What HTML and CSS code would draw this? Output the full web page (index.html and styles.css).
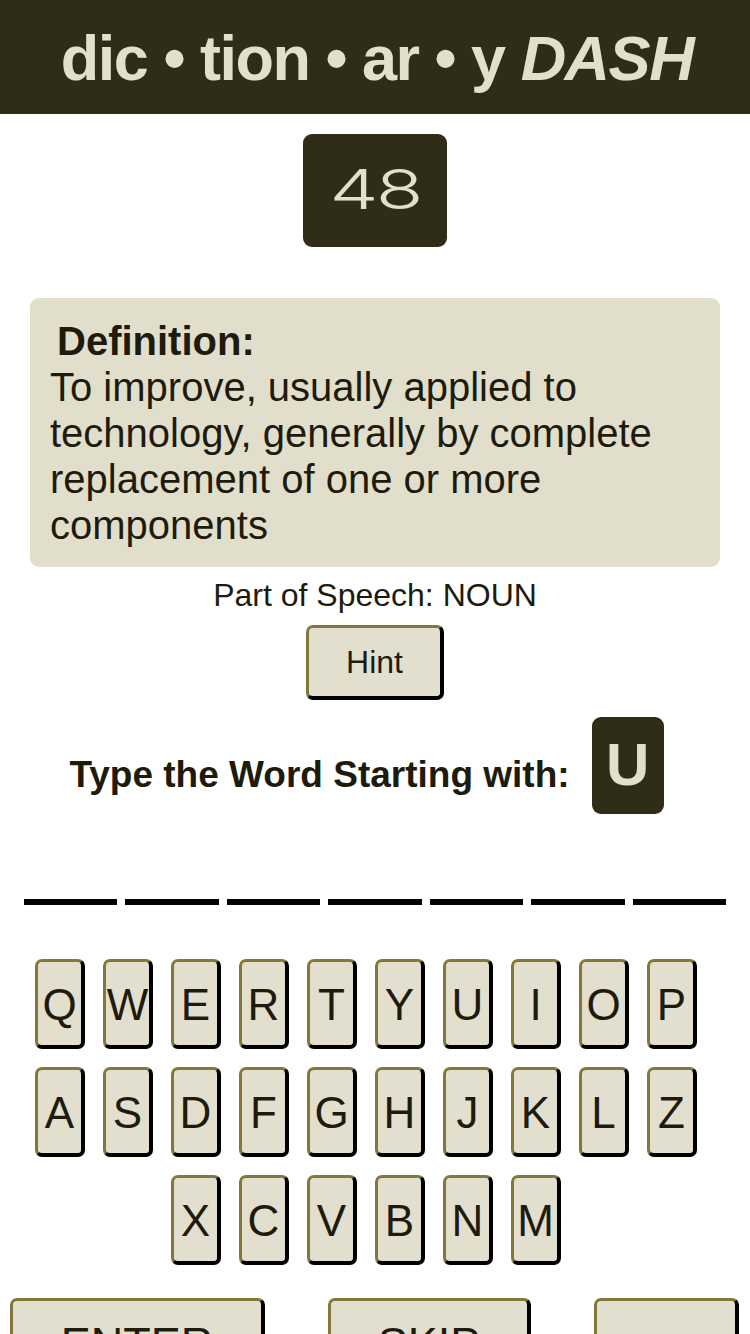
FILE: index.html
```html
<!DOCTYPE html>
<html>
<head>
<meta charset="utf-8">
<link rel="stylesheet" href="styles.css">
</head>
<body>
<header class="top">
  <h1 class="title">dic • tion • ar • y <em>DASH</em></h1>
</header>
<main class="game">
  <div class="score"><span class="score-num">48</span></div>

  <section class="definition">
    <div class="def-label">Definition:</div>
    <div class="def-text">To improve, usually applied to technology, generally by complete replacement of one or more components</div>
  </section>

  <div class="pos">Part of Speech: NOUN</div>
  <button class="hint">Hint</button>

  <div class="prompt">
    <span class="prompt-text">Type the Word Starting with:</span>
    <span class="letter-box">U</span>
  </div>

  <div class="blanks">
    <span class="blank"></span><span class="blank"></span><span class="blank"></span><span class="blank"></span><span class="blank"></span><span class="blank"></span><span class="blank"></span>
  </div>

  <div class="keyboard">
    <div class="krow">
      <button class="key">Q</button><button class="key">W</button><button class="key">E</button><button class="key">R</button><button class="key">T</button><button class="key">Y</button><button class="key">U</button><button class="key">I</button><button class="key">O</button><button class="key">P</button>
    </div>
    <div class="krow">
      <button class="key">A</button><button class="key">S</button><button class="key">D</button><button class="key">F</button><button class="key">G</button><button class="key">H</button><button class="key">J</button><button class="key">K</button><button class="key">L</button><button class="key">Z</button>
    </div>
    <div class="krow">
      <button class="key">X</button><button class="key">C</button><button class="key">V</button><button class="key">B</button><button class="key">N</button><button class="key">M</button>
    </div>
  </div>

  <div class="actions">
    <button class="action enter">ENTER</button>
    <button class="action skip">SKIP</button>
    <button class="action del" aria-label="Delete">
      <svg class="del-icon" width="56" height="40" viewBox="0 0 56 40"><path d="M18 4 H50 a3 3 0 0 1 3 3 V33 a3 3 0 0 1 -3 3 H18 L3 20 Z" fill="none" stroke="#1e1b0c" stroke-width="3.5" stroke-linejoin="round"/><path d="M26 12 L42 28 M42 12 L26 28" stroke="#1e1b0c" stroke-width="3.5" stroke-linecap="round"/></svg>
    </button>
  </div>
</main>
</body>
</html>
```

FILE: styles.css
```css
* { box-sizing: border-box; }
html, body { margin: 0; padding: 0; background: #ffffff; }
body {
  font-family: "Liberation Sans", Arial, sans-serif;
  color: #1e1b0c;
  width: 750px;
  height: 1334px;
  overflow: hidden;
}

.top {
  background: #2f2c17;
  height: 114px;
  display: flex;
  align-items: center;
  justify-content: center;
}
.title {
  margin: 0;
  color: #e2dfcd;
  font-size: 63px;
  font-weight: 700;
  letter-spacing: -1.5px;
  line-height: 1;
  padding-top: 2px;
  padding-left: 4px;
}
.title em { font-style: italic; }

.game {
  display: flex;
  flex-direction: column;
  align-items: center;
}

.score {
  margin-top: 20px;
  width: 144px;
  height: 113px;
  background: #2f2c17;
  border-radius: 9px;
  display: flex;
  align-items: center;
  justify-content: center;
}
.score-num {
  color: #e2dfcd;
  font-family: "Inter", "DejaVu Sans", sans-serif;
  font-weight: 300;
  font-size: 55px;
  line-height: 1;
  display: inline-block;
  transform: scaleX(1.42);
  letter-spacing: -2px;
  padding-bottom: 2px;
}

.definition {
  margin-top: 51px;
  width: 690px;
  background: #e1dfcc;
  border-radius: 9px;
  padding: 20px 20px 19px 20px;
  font-size: 40px;
  line-height: 46px;
}
.def-label {
  font-weight: 700;
  padding-left: 7px;
}

.pos {
  margin-top: 5px;
  font-size: 32px;
  line-height: 46px;
}

.hint {
  margin-top: 7px;
  width: 138px;
  height: 75px;
  font-family: "Liberation Sans", Arial, sans-serif;
  font-size: 32px;
  color: #1e1b0c;
  background: #e2dfcf;
  border-style: solid;
  border-width: 3px 4px 4px 3px;
  border-color: #85773a #000 #000 #85773a;
  border-radius: 7px;
  padding: 0;
}

.prompt {
  margin-top: 17px;
  display: flex;
  align-items: center;
  margin-right: 17px;
}
.prompt-text {
  font-size: 37px;
  font-weight: 700;
  padding-top: 18px;
}
.letter-box {
  margin-left: 22px;
  width: 72px;
  height: 97px;
  background: #2f2c17;
  color: #e2dfcd;
  border-radius: 9px;
  font-size: 60px;
  font-weight: 700;
  display: flex;
  align-items: center;
  justify-content: center;
  padding-bottom: 2px;
}

.blanks {
  margin-top: 85px;
  width: 750px;
  padding: 0 20px;
  display: flex;
}
.blank {
  flex: 1;
  height: 6px;
  margin: 0 4px;
  background: #000;
}

.keyboard {
  margin-top: 54px;
  display: flex;
  flex-direction: column;
  align-items: center;
  gap: 18px;
}
.krow {
  display: flex;
}
.key {
  width: 50px;
  height: 90px;
  margin-right: 18px;
  padding: 0;
  font-family: "Liberation Sans", Arial, sans-serif;
  font-size: 44px;
  color: #1e1b0c;
  background: #e2dfcf;
  border-style: solid;
  border-width: 3px 4px 4px 3px;
  border-color: #85773a #000 #000 #85773a;
  border-radius: 7px;
  display: flex;
  align-items: center;
  justify-content: center;
  padding-top: 2px;
}

.actions {
  margin-top: 33px;
  width: 750px;
  display: flex;
  align-items: flex-start;
}
.action {
  height: 92px;
  font-family: "Liberation Sans", Arial, sans-serif;
  font-size: 45px;
  color: #1e1b0c;
  background: #e2dfcf;
  border-style: solid;
  border-width: 3px 4px 4px 3px;
  border-color: #85773a #000 #000 #85773a;
  border-radius: 7px;
  padding: 0;
}
.enter { width: 255px; margin-left: 10px; }
.skip { width: 203px; margin-left: 63px; }
.del { width: 145px; margin-left: 63px; height: 110px; padding-top: 50px; }
.del-icon { display: block; margin: 0 auto; }
```
